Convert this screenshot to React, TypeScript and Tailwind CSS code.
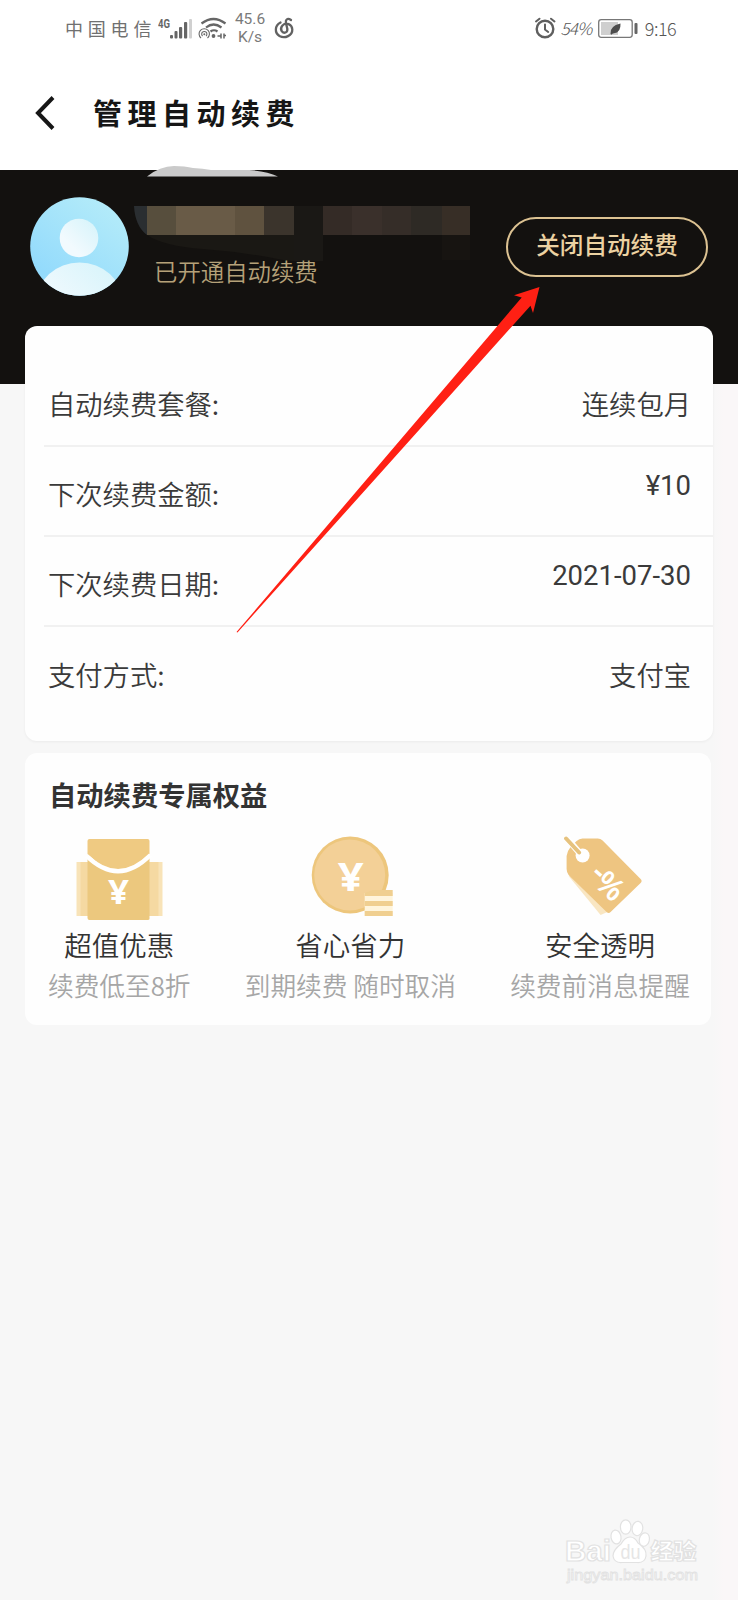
import type { ReactNode } from "react";

const rows = [
  { label: "自动续费套餐:", value: "连续包月", raised: false },
  { label: "下次续费金额:", value: "¥10", raised: true },
  { label: "下次续费日期:", value: "2021-07-30", raised: true },
  { label: "支付方式:", value: "支付宝", raised: false },
];

// Pixelated user name: [x, width, colour]
const mosaic: [number, number, string][] = [
  [14, 29, "#574e3d"],
  [43, 59, "#695b47"],
  [102, 29, "#5f523f"],
  [131, 30, "#3b342c"],
  [190, 29, "#342b26"],
  [219, 30, "#3a302b"],
  [249, 29, "#352d28"],
  [278, 31, "#2e2a25"],
  [309, 28, "#372e26"],
];

function StatusBar() {
  return (
    <div className="flex h-14 items-center pl-[65px] pr-[60px] text-[#666]">
      <span className="w-[93px] text-[18px] tracking-[4.8px] text-[#707070]">中国电信</span>
      <svg className="h-[26px] w-[36px]" viewBox="158 14 36 26">
        <text x="158" y="27" fontFamily="Roboto" fontSize="12.5" fontWeight="700" textLength="12" lengthAdjust="spacingAndGlyphs" fill="#666">
          4G
        </text>
        <g fill="#666">
          <rect x="170" y="34" width="3" height="3.6" rx="1" />
          <rect x="174.5" y="30" width="3" height="7.6" rx="1" />
          <rect x="179" y="26" width="3.2" height="11.6" rx="1" />
          <rect x="184" y="21" width="3.2" height="16.6" rx="1" />
          <rect x="189" y="18" width="3" height="19.6" rx="1" fill="#d0d0d0" />
        </g>
      </svg>
      <svg className="ml-[3px] h-[26px] w-[32px]" viewBox="197 14 32 26" fill="none" stroke="#666" strokeWidth="2.2">
        <path d="M201.5 22.5Q213.5 13.5 225.5 22.5" />
        <path d="M206 26.5Q213.5 20.5 221.5 26.5" />
        <path d="M210.5 30.5Q214 28 217.5 30.5" />
        <g strokeWidth="1.1">
          <path d="M201 37a5.2 5.2 0 1 1 6.5 0" />
          <path d="M202.6 35a2.6 2.6 0 1 1 3.4 0" />
        </g>
        <circle cx="204.3" cy="33.3" r="1" fill="#666" stroke="none" />
        <circle cx="213.5" cy="35" r="1.9" fill="#666" stroke="none" />
        <path d="M217.5 35h3M221 32.500v5M224 32.500v5M224 34.500h2" strokeWidth="1.5" />
      </svg>
      <div className="ml-[4px] w-[34px] text-center font-[Roboto] text-[15.5px] leading-[18px] text-[#7a7a7a]">
        <div>45.6</div>
        <div>K/s</div>
      </div>
      <svg className="ml-[6px] h-[24px] w-[22px]" viewBox="273 16 22 24" fill="none" stroke="#626262" strokeWidth="2.3" strokeLinecap="round">
        <path d="M280.5 22.5C274.5 25.5 274.5 33 279.5 36C285 39 292.5 35.5 292.3 29.5C292 24 286 22 282.5 25.5C279 29.5 282.5 33.5 285.5 32.5C290.5 30.5 284.5 24.5 286 20.5Q287.5 17.5 291 20" />
      </svg>

      <svg className="ml-auto h-[24px] w-[22px]" viewBox="534 15 22 24" fill="none" stroke="#5f5f5f" strokeWidth="2.4" strokeLinecap="round">
        <circle cx="545" cy="28" r="8.3" />
        <path d="M545 23.5v5l3.2 2.5M536 20.5l3.5-2.8M554.5 20.5l-3.5-2.8" strokeWidth="2" />
      </svg>
      <span className="ml-[4px] w-[32px] text-center text-[17px] font-light italic leading-[26px] tracking-[-0.8px] text-[#555]">54%</span>
      <svg className="ml-[5px] h-[24px] w-[42px]" viewBox="597 15 42 24">
        <rect x="598.7" y="18.7" width="33.5" height="17.6" rx="2.5" fill="#fff" stroke="#777" strokeWidth="1.3" />
        <rect x="601" y="21" width="17" height="13" fill="#cfcfcf" />
        <path d="M610.5 33q-1-8 10-10.5q.5 9-6.5 9.8q-2 0-2.5 1.5z" fill="#4d4d4d" />
        <rect x="634.5" y="22" width="3" height="11" rx="1" fill="#666" />
      </svg>
      <span className="ml-[5px] mr-[1px] w-[33px] text-center text-[18px] font-light leading-[26px] tracking-[-0.5px] text-[#555]">9:16</span>
    </div>
  );
}

function TitleBar() {
  return (
    <div className="flex h-[114px] items-center pl-[35px]">
      <svg className="h-9 w-5" viewBox="0 0 20 36" fill="none" stroke="#161616" strokeWidth="4">
        <path d="M18 2.5L3 18L18 33.5" />
      </svg>
      <h1 className="-mt-[2px] ml-[38px] text-[29px] font-bold leading-none tracking-[5.5px] text-[#161616]">管理自动续费</h1>
    </div>
  );
}

function Avatar() {
  return (
    <svg className="h-[99px] w-[99px]" viewBox="0 0 99 99">
      <defs>
        <linearGradient id="sky" x1="0.8" y1="0" x2="0.2" y2="0.8">
          <stop offset="0" stopColor="#b5ecf9" />
          <stop offset="1" stopColor="#94dbfc" />
        </linearGradient>
        <linearGradient id="body" x1="1" y1="0" x2="0" y2="1">
          <stop offset="0" stopColor="#d4f3fa" />
          <stop offset="0.7" stopColor="#f2fafe" />
        </linearGradient>
        <clipPath id="round">
          <circle cx="49.5" cy="49.5" r="49.3" />
        </clipPath>
      </defs>
      <g clipPath="url(#round)">
        <rect width="99" height="99" fill="url(#sky)" />
        <circle cx="49" cy="41" r="19.3" fill="url(#body)" />
        <ellipse cx="49.5" cy="105" rx="43" ry="39.5" fill="url(#body)" />
      </g>
    </svg>
  );
}

function MaskedName() {
  return (
    <svg className="h-[55px] w-[337px]" viewBox="0 0 337 55">
      <path d="M1 0H14V29Q2 20 1 0z" fill="#2a2e31" />
      <path d="M14 29H161V55L150 54Q110 46 70 43Q30 40 14 29z" fill="#1a1814" />
      <rect x="161" width="29" height="55" fill="#1a1815" />
      <rect x="309" y="29" width="28" height="25" fill="#171411" />
      {mosaic.map(([x, width, fill]) => (
        <rect key={x} x={x} width={width} height="29" fill={fill} />
      ))}
    </svg>
  );
}

function AccountBanner() {
  return (
    <section className="relative flex h-[214px] items-start bg-[#13110f] px-[30px]">
      <svg className="absolute left-[147px] -top-[4px] h-[11px] w-[132px]" viewBox="0 0 132 11">
        <path d="M0 10.5Q13 0 27 0Q38 0 46 2Q56 2.5 64 4H102Q120 5 131 10.5z" fill="#cacaca" />
      </svg>
      <div className="mt-[27px]">
        <Avatar />
      </div>
      <div className="ml-[4px] mt-[36px] flex flex-col">
        <MaskedName />
        <p className="-mt-[3px] ml-[21px] text-[23.4px] font-[350] leading-[26px] text-[#b5a179]">已开通自动续费</p>
      </div>
      <button className="ml-auto mt-[47px] h-[60px] w-[202px] rounded-full border-2 border-[#dcc292] pb-[4px] text-[23.6px] font-medium leading-none text-[#ecd2a2]">
        关闭自动续费
      </button>
    </section>
  );
}

function PlanCard() {
  return (
    <section className="relative -mt-[58px] ml-[25px] h-[415px] w-[688px] rounded-xl bg-[#fefefe] pt-[30.6px] shadow-[0_1px_3px_rgba(0,0,0,0.05)]">
      <dl className="ml-[19px] divide-y-2 divide-[#f1f1f1]">
        {rows.map((row) => (
          <div key={row.label} className="flex h-[90.3px] items-center justify-between pl-[4px] pr-[22px] pt-[5px] text-[27.3px] leading-none text-[#3a3a3a]">
            <dt className="font-[350]">{row.label}</dt>
            <dd className={row.raised ? "-mt-[16px] font-[Roboto] text-[27.5px]" : "font-[350]"}>{row.value}</dd>
          </div>
        ))}
      </dl>
    </section>
  );
}

function EnvelopeIcon() {
  return (
    <svg className="h-[84px] w-[88px]" viewBox="75.5 836 88 84">
      <rect x="77" y="862" width="86" height="54" fill="#f8e3b8" />
      <rect x="81" y="862" width="78" height="54" fill="#f5d9a2" />
      <path d="M88 858Q119 883 150 858V919Q150 920 148 920H90Q88 920 88 918z" fill="#ecc87e" />
      <path d="M88 841Q88 839 90 839H148Q150 839 150 841V854Q119 884 88 854z" fill="#efca82" />
      <path d="M87 856Q119 887 151 855" fill="none" stroke="#fff" strokeWidth="4.2" />
      <text x="108.5" y="903.5" textLength="21" lengthAdjust="spacingAndGlyphs" fontFamily="Noto Sans" fontSize="34" fontWeight="700" fill="#fff">¥</text>
    </svg>
  );
}

function CoinIcon() {
  return (
    <svg className="h-[84px] w-[88px]" viewBox="306.300 836 88 84">
      <circle cx="350.5" cy="875" r="38.5" fill="#edc67c" />
      <circle cx="350" cy="875" r="35.5" fill="#f3d097" />
      <text x="338" y="890.5" textLength="26" lengthAdjust="spacingAndGlyphs" fontFamily="Noto Sans" fontSize="40" fontWeight="700" fill="#fff">¥</text>
      <path d="M365 893H393V916H365z" fill="#fff5dc" />
      <path d="M373 890H393V896H365V893zM365 901H393V906H365zM365 911H393V916H365z" fill="#f0cf90" />
    </svg>
  );
}

function TagIcon() {
  return (
    <svg className="h-[84px] w-[88px]" viewBox="556.400 836 88 84">
      <path d="M569 876L601 915L610 911L590 880z" fill="#f9e6c2" />
      <path d="M567 856Q567.5 851 571 847L577 841Q579.5 838.5 583 838.5H598Q601 838.5 603 840.5L641 879Q643 881 641 883L611 912Q609 914 607 912L569 875Q567 872 567 869z" fill="#eec581" />
      <circle cx="583" cy="855.5" r="7" fill="#fff" />
      <path d="M568 839L580 853" stroke="#fff" strokeWidth="6.5" />
      <path d="M566.5 838.5L579.5 852.5" stroke="#e6c27e" strokeWidth="4" strokeLinecap="round" />
      <text transform="translate(592 873) rotate(42)" fontFamily="Noto Sans" fontSize="31" fontWeight="600" fill="#fff">
        <tspan x="0" y="4">-</tspan>
        <tspan x="9" y="8">%</tspan>
      </text>
    </svg>
  );
}

function Benefit({ icon, title, note }: { icon: ReactNode; title: string; note: string }) {
  return (
    <li className="flex flex-col items-center whitespace-nowrap">
      {icon}
      <h3 className="mt-[10px] text-[27.5px] font-[350] leading-[28px] text-[#333]">{title}</h3>
      <p className="mt-[14px] text-[25.7px] font-[350] leading-[26px] text-[#a6a6a6]">{note}</p>
    </li>
  );
}

function BenefitsCard() {
  return (
    <section className="ml-[25px] mt-[12px] h-[272px] w-[686px] rounded-xl bg-[#fefefe] pl-[23px] pr-[21px] pt-[27px]">
      <h2 className="ml-[1px] text-[27.3px] font-bold leading-[28px] text-[#333]">自动续费专属权益</h2>
      <ul className="mt-[28px] flex justify-between">
        <Benefit icon={<EnvelopeIcon />} title="超值优惠" note="续费低至8折" />
        <Benefit icon={<CoinIcon />} title="省心省力" note="到期续费 随时取消" />
        <Benefit icon={<TagIcon />} title="安全透明" note="续费前消息提醒" />
      </ul>
    </section>
  );
}

function Pointer() {
  return (
    <svg className="pointer-events-none absolute left-[230px] top-[280px] h-[360px] w-[320px]" viewBox="230 280 320 360">
      <path d="M539.5 287L514 295.3L521.7 297.5L236.5 632L237.5 632.5L530.5 305.7L533 313z" fill="#ff2014" />
    </svg>
  );
}

function Watermark() {
  return (
    <svg className="absolute bottom-0 left-[556px] h-[90px] w-[160px]" viewBox="556 1510 160 90" fill="#fff" stroke="#e2e2e2" strokeWidth="1.2">
      <text x="565" y="1561" fontFamily="Liberation Sans" fontSize="29" fontWeight="700" textLength="46" lengthAdjust="spacingAndGlyphs">Bai</text>
      <ellipse cx="616" cy="1537" rx="5" ry="7" transform="rotate(-10 616 1537)" />
      <ellipse cx="625.7" cy="1527" rx="5.3" ry="7.2" />
      <ellipse cx="637.5" cy="1528.5" rx="5.3" ry="7.2" transform="rotate(8 637 1528)" />
      <ellipse cx="644.5" cy="1539.5" rx="5" ry="6.8" transform="rotate(14 644 1539)" />
      <path d="M630 1537Q635 1537 638 1543Q647 1549 646 1556Q645 1563 637 1562.5H622Q614 1563 613 1556Q613 1550 621 1544Q625 1537 630 1537z" />
      <text x="620.5" y="1559" fontFamily="Liberation Sans" fontSize="21" textLength="20" lengthAdjust="spacingAndGlyphs" fill="#e6e6e6" stroke="none">du</text>
      <text x="650.5" y="1559" fontFamily="Noto Sans CJK SC" fontSize="22" fontWeight="900" textLength="46" lengthAdjust="spacingAndGlyphs">经验</text>
      <text x="567" y="1579.5" fontFamily="Liberation Sans" fontSize="15.5" textLength="131" lengthAdjust="spacingAndGlyphs" strokeWidth="0.9">jingyan.baidu.com</text>
    </svg>
  );
}

export default function App() {
  return (
    <div className="relative h-[1600px] w-[738px] overflow-hidden bg-[linear-gradient(to_right,#f7f7f7_712px,#faf7f8_724px)] font-['Noto_Sans_CJK_SC',sans-serif]">
      <header className="bg-white">
        <StatusBar />
        <TitleBar />
      </header>
      <main>
        <AccountBanner />
        <PlanCard />
        <BenefitsCard />
      </main>
      <Pointer />
      <Watermark />
    </div>
  );
}
